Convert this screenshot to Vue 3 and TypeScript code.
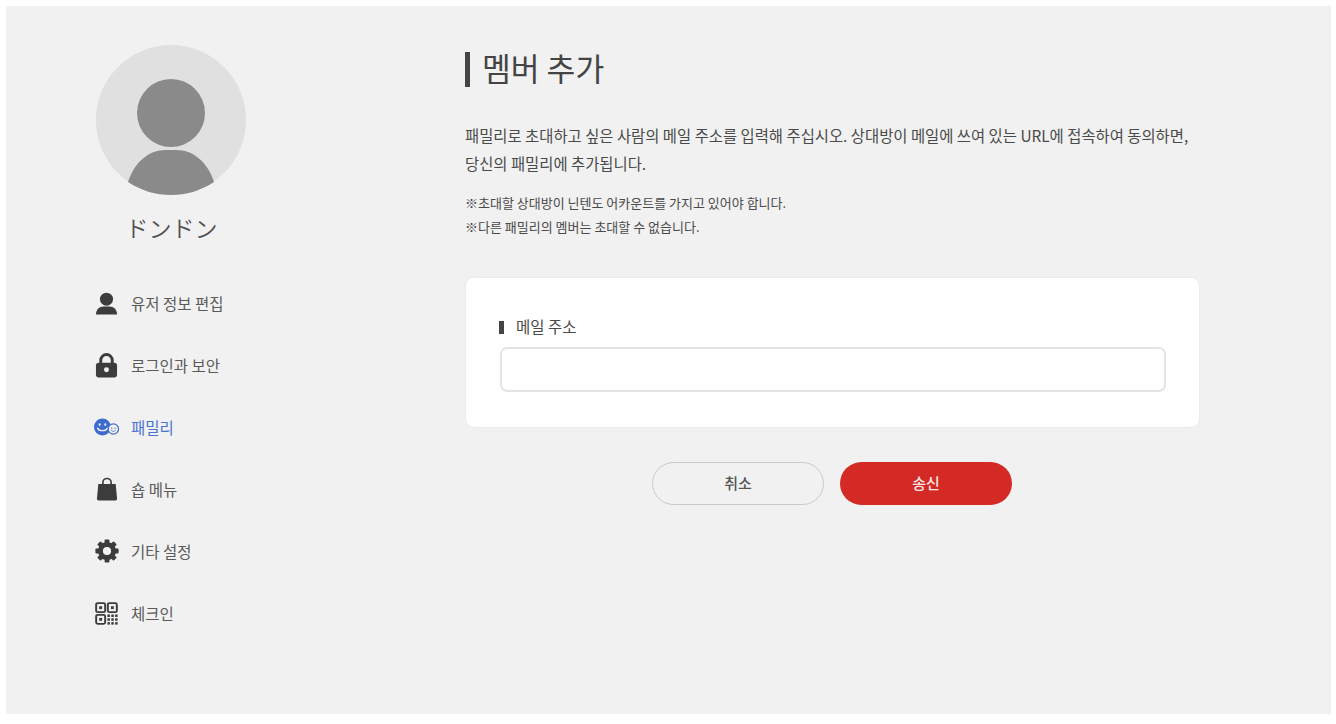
<script setup lang="ts">
const navItems: { label: string; icon: string; active?: boolean }[] = [
  { label: '유저 정보 편집', icon: 'user' },
  { label: '로그인과 보안', icon: 'lock' },
  { label: '패밀리', icon: 'family', active: true },
  { label: '숍 메뉴', icon: 'bag' },
  { label: '기타 설정', icon: 'gear' },
  { label: '체크인', icon: 'qr' },
]
const teeth = [0, 45, 90, 135, 180, 225, 270, 315]
</script>

<template>
  <div class="page">
    <div class="panel">
      <aside class="side">
        <div class="avatar">
          <svg viewBox="0 0 150 150" width="150" height="150">
            <circle cx="75" cy="75" r="75" fill="#e0e0e0" />
            <circle cx="75" cy="68" r="34" fill="#8a8a8a" />
            <path d="M32 137 C38 118 52 105 70 105 H80 C98 105 112 118 118 137 C104 146 90 150 75 150 C60 150 46 146 32 137 Z" fill="#8a8a8a" />
          </svg>
        </div>
        <div class="name">ドンドン</div>
        <nav class="nav">
          <div v-for="item in navItems" :key="item.label" class="nav-item" :class="{ active: item.active }">
            <span class="nav-icon">
              <svg v-if="item.icon === 'user'" viewBox="0 0 24 24" width="23" height="23">
                <circle cx="12" cy="7.5" r="6.8" fill="#3c3c3c" />
                <path d="M1 23.5 C1 18 4.5 15 9 15 H15 C19.5 15 23 18 23 23.5 Z" fill="#3c3c3c" />
              </svg>
              <svg v-else-if="item.icon === 'lock'" viewBox="0 0 24 26" width="23" height="25">
                <path d="M6 11 V7.5 A6 6 0 0 1 18 7.5 V11" fill="none" stroke="#3c3c3c" stroke-width="3" />
                <rect x="1" y="10" width="22" height="15.5" rx="3" fill="#3c3c3c" />
                <circle cx="12" cy="17.5" r="2.6" fill="#f1f1f1" />
              </svg>
              <svg v-else-if="item.icon === 'family'" viewBox="0 0 31 22" width="31" height="22">
                <circle cx="10.5" cy="11" r="10.5" fill="#3d6bce" />
                <ellipse cx="7" cy="8" rx="1.2" ry="1.7" fill="#f1f1f1" />
                <ellipse cx="14" cy="8" rx="1.2" ry="1.7" fill="#f1f1f1" />
                <path d="M4.5 12.5 C6 16.5 15 16.5 16.5 12.5" fill="none" stroke="#f1f1f1" stroke-width="1.8" stroke-linecap="round" />
                <circle cx="24" cy="13.5" r="6.4" fill="#f1f1f1" stroke="#3d6bce" stroke-width="1.5" />
                <circle cx="22" cy="12.4" r=".9" fill="#3d6bce" />
                <circle cx="26" cy="12.4" r=".9" fill="#3d6bce" />
                <path d="M21.2 15 C22.4 16.8 25.6 16.8 26.8 15" fill="none" stroke="#3d6bce" stroke-width="1" />
              </svg>
              <svg v-else-if="item.icon === 'bag'" viewBox="0 0 24 26" width="22" height="24">
                <path d="M7.5 9 V6 A4.5 4.5 0 0 1 16.5 6 V9" fill="none" stroke="#3c3c3c" stroke-width="1.8" />
                <path d="M2.5 7.5 H21.5 L23 24 A1.6 1.6 0 0 1 21.4 25.5 H2.6 A1.6 1.6 0 0 1 1 24 Z" fill="#3c3c3c" />
              </svg>
              <svg v-else-if="item.icon === 'gear'" viewBox="0 0 24 24" width="24" height="24">
                <circle cx="12" cy="12" r="6.6" fill="none" stroke="#3c3c3c" stroke-width="5" />
                <rect v-for="deg in teeth" :key="deg" x="9.6" y="0.4" width="4.8" height="5" rx="0.8" fill="#3c3c3c" :transform="`rotate(${deg} 12 12)`" />
              </svg>
              <svg v-else viewBox="0 0 24 24" width="23" height="23">
                <g fill="none" stroke="#3c3c3c" stroke-width="2">
                  <rect x="1.2" y="1.2" width="9.4" height="9.4" rx="1.6" />
                  <rect x="13.4" y="1.2" width="9.4" height="9.4" rx="1.6" />
                  <rect x="1.2" y="13.4" width="9.4" height="9.4" rx="1.6" />
                </g>
                <g fill="#3c3c3c">
                  <rect x="4.4" y="4.4" width="3" height="3" />
                  <rect x="16.6" y="4.4" width="3" height="3" />
                  <rect x="4.4" y="16.6" width="3" height="3" />
                  <rect x="13" y="13" width="2.6" height="2.6" /><rect x="17" y="13" width="2.6" height="2.6" /><rect x="21" y="13" width="2.6" height="2.6" />
                  <rect x="13" y="17" width="2.6" height="2.6" /><rect x="17" y="17" width="2.6" height="2.6" /><rect x="21" y="17" width="2.6" height="2.6" />
                  <rect x="13" y="21" width="2.6" height="2.6" /><rect x="17" y="21" width="2.6" height="2.6" /><rect x="21" y="21" width="2.6" height="2.6" />
                </g>
              </svg>
            </span>
            <span class="nav-label">{{ item.label }}</span>
          </div>
        </nav>
      </aside>

      <main class="main">
        <h1 class="title">멤버 추가</h1>
        <p class="lead">패밀리로 초대하고 싶은 사람의 메일 주소를 입력해 주십시오. 상대방이 메일에 쓰여 있는 URL에 접속하여 동의하면,<br />당신의 패밀리에 추가됩니다.</p>
        <p class="note">※초대할 상대방이 닌텐도 어카운트를 가지고 있어야 합니다.<br />※다른 패밀리의 멤버는 초대할 수 없습니다.</p>
        <section class="card">
          <label class="label">메일 주소</label>
          <input class="input" type="text" />
        </section>
        <div class="actions">
          <button class="btn cancel" type="button"><span>취소</span></button>
          <button class="btn send" type="button"><span>송신</span></button>
        </div>
      </main>
    </div>
  </div>
</template>

<style>
html, body { margin: 0; background: #fff; }
</style>

<style scoped>
.page {
  box-sizing: border-box;
  width: 1336px;
  height: 724px;
  padding: 6px 5px 10px 6px;
  background: #fff;
  font-family: "Noto Sans CJK KR", "Noto Sans", sans-serif;
  overflow: hidden;
}
.panel {
  display: flex;
  height: 708px;
  background: #f1f1f1;
}
.side {
  box-sizing: border-box;
  width: 459px;
  padding: 39px 0 0 88px;
}
.avatar { width: 150px; height: 150px; margin-left: 2px; }
.avatar svg { display: block; }
.name {
  width: 155px;
  margin-top: 14px;
  text-align: center;
  font-family: "Noto Sans CJK JP", sans-serif;
  font-size: 23px;
  font-weight: 350;
  line-height: 36px;
  color: #4f4f4f;
}
.nav { margin-top: 27px; }
.nav-item {
  display: flex;
  align-items: center;
  height: 62px;
  color: #5a5a5a;
  font-size: 15.5px;
}
.nav-item.active { color: #4a74cf; }
.nav-icon {
  display: flex;
  justify-content: center;
  align-items: center;
  width: 37px;
  flex: none;
}
.nav-icon svg { display: block; margin-right: 12px; }
.main { flex: 1; }
.title {
  position: relative;
  margin: 39px 0 0;
  padding-left: 17px;
  font-size: 31.3px;
  font-weight: 400;
  line-height: 46px;
  color: #444;
}
.title::before {
  content: "";
  position: absolute;
  left: 0;
  top: 7px;
  width: 5px;
  height: 35px;
  background: #444;
}
.lead {
  margin: 30px 0 0;
  font-size: 15.4px;
  line-height: 28px;
  color: #4a4a4a;
}
.note {
  margin: 14px 0 0;
  font-size: 13px;
  line-height: 23.5px;
  color: #4a4a4a;
}
.card {
  box-sizing: border-box;
  width: 735px;
  height: 151px;
  margin-top: 39px;
  padding: 38px 34px 0 34px;
  background: #fff;
  border: 1px solid #ececec;
  border-radius: 9px;
}
.label {
  position: relative;
  display: block;
  padding-left: 17px;
  margin-left: -1px;
  font-size: 15.5px;
  line-height: 20px;
  color: #4a4a4a;
}
.label::before {
  content: "";
  position: absolute;
  left: 0;
  top: 5px;
  width: 5px;
  height: 13px;
  background: #444;
}
.input {
  display: block;
  box-sizing: border-box;
  width: 666px;
  height: 45px;
  margin-top: 11px;
  background: #fff;
  border: 2px solid #e4e4e4;
  border-radius: 7px;
  outline: none;
}
.actions {
  display: flex;
  justify-content: center;
  gap: 16px;
  width: 734px;
  margin-top: 34px;
}
.btn {
  box-sizing: border-box;
  width: 172px;
  height: 43px;
  border-radius: 22px;
  font-family: inherit;
  font-size: 15px;
  font-weight: 500;
  padding: 0 0 3px;
}
.cancel {
  background: #f1f1f1;
  border: 1px solid #c9c9c9;
  color: #555;
}
.send {
  background: #d32a26;
  border: 0;
  color: #f6e6e4;
}
</style>
